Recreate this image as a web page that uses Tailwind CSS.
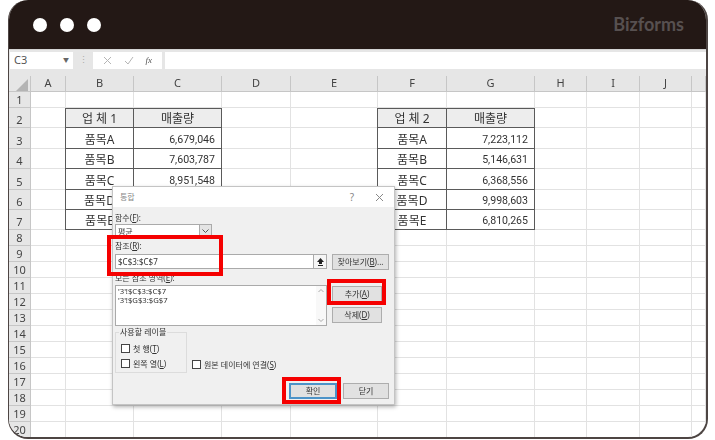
<!DOCTYPE html>
<html lang="ko">
<head>
  <meta charset="UTF-8">
  <title>Bizforms - 통합</title>
  <script src="https://cdn.jsdelivr.net/npm/@tailwindcss/browser@4"></script>
</head>
<body class="bg-white w-[715px] h-[440px] overflow-hidden font-['Noto_Sans','Noto_Sans_CJK_KR',sans-serif] text-[#444]">
  <!-- window frame -->
  <div class="relative ml-2 w-[700px] h-[439px] rounded-[20px] border-l border-r-2 border-b-2 border-[#4d4543] overflow-hidden bg-white blur-[0.3px]">
    <!-- title bar -->
    <div class="h-[49px] bg-[#231815] flex items-center pl-[24px] pr-[22px] gap-[13px]">
      <span class="w-[14px] h-[14px] rounded-full bg-white"></span>
      <span class="w-[14px] h-[14px] rounded-full bg-white"></span>
      <span class="w-[14px] h-[14px] rounded-full bg-white"></span>
      <span class="ml-auto text-[18px] font-bold text-[#575050] font-['Lato',sans-serif]">Bizforms</span>
    </div>

    <!-- formula bar -->
    <div class="h-[27px] bg-[#e6e6e6] border-t border-[#d4d4d4] flex items-start pt-[2px] text-[11px]">
      <div class="w-[63px] h-[17px] bg-white ml-px flex items-center justify-between px-1 text-[#555]">
        <span>C3</span><span class="text-[6px] text-[#666]">▼</span>
      </div>
      <span class="w-5 text-center text-[9px] leading-[15px] text-[#aaa]">⋮</span>
      <div class="w-[69px] h-[17px] bg-white flex items-center justify-around px-1 text-[#b5b5b5]">
        <svg class="w-[9px] h-[9px]" viewBox="0 0 9 9" fill="none" stroke="#b5b5b5"><path d="M1 1l7 7M8 1L1 8"/></svg>
        <svg class="w-[10px] h-[9px]" viewBox="0 0 10 9" fill="none" stroke="#b5b5b5"><path d="M1 5l3 3 5-7"/></svg>
        <span class="italic text-[9px] font-['Liberation_Serif',serif] text-[#555]">fx</span>
      </div>
      <div class="flex-1 h-[17px] bg-white ml-[3px]"></div>
    </div>

    <!-- sheet, cells are filled in by the script below -->
    <div id="sheet" class="grid grid-cols-[22px_35px_68px_88px_69px_87px_69px_88px_52px_53px_52px_1fr] grid-rows-[16px_16px_20px_21px_20px_21px_20px_20px_16px_16px_16px_16px_16px_16px_16px_16px_16px_16px_16px_16px_16px_16px] text-[11px]"></div>

    <!-- 통합 dialog -->
    <div class="absolute left-[103px] top-[186px] w-[283px] h-[219px] bg-[#f0f0f0] border border-[#c4c4c4] shadow-[1px_2px_4px_rgba(0,0,0,0.3)] text-[8px] text-[#333]">
      <div class="h-5 bg-white flex items-center pl-[7px] text-[#888]">
        <span>통합</span>
        <span class="ml-auto text-[10px] mr-[21px]">?</span>
        <svg class="w-[9px] h-[9px] mr-[10px]" viewBox="0 0 9 9" fill="none" stroke="#888"><path d="M1 1l7 7M8 1L1 8"/></svg>
      </div>
      <div class="pl-[2px] pr-[5px] pt-1">
        <div class="h-[13px] leading-[13px]">함수(<u>F</u>):</div>
        <div class="flex w-[97px] h-[13px] bg-white border border-[#aaa]">
          <span class="flex-1 pl-[2px] leading-[13px]">평균</span>
          <span class="w-3 bg-[#e4e4e4] border-l border-[#aaa] flex items-center justify-center">
            <svg class="w-[7px] h-1" viewBox="0 0 7 4" fill="none" stroke="#555"><path d="M.5.5l3 3 3-3"/></svg>
          </span>
        </div>

        <div class="mt-[3px] h-[12px] leading-[12px]">참조(<u>R</u>):</div>
        <div class="flex mt-[2px] items-start">
          <div class="flex w-[212px] h-[15px] bg-white border border-[#aaa]">
            <span class="flex-1 pl-[2px] text-[8px] leading-[13px]">$C$3:$C$7</span>
            <span class="w-[13px] border-l border-[#aaa] bg-[#f5f5f5] flex items-center justify-center">
              <svg class="w-[7px] h-2" viewBox="0 0 7 8" fill="#222"><path d="M3.5 0L7 4H5v2H2V4H0zM1 7h5v1H1z"/></svg>
            </span>
          </div>
          <button class="ml-[5px] w-[57px] h-4 bg-[#e1e1e1] border border-[#adadad] text-[8px] leading-[14px]">찾아보기(<u>B</u>)...</button>
        </div>

        <div class="mt-px h-[13px] leading-[13px]">모든 참조 영역(<u>E</u>):</div>
        <div class="flex mt-px items-start">
          <div class="flex w-[212px] h-[41px] bg-white border border-[#aaa]">
            <div class="flex-1 pl-[2px] text-[7.7px] leading-[9px] pt-px">
              <p>'3'!$C$3:$C$7</p>
              <p>'3'!$G$3:$G$7</p>
            </div>
            <div class="w-[10px] flex flex-col justify-between items-center py-[3px] bg-[#f8f8f8]">
              <svg class="w-[6px] h-[3px]" viewBox="0 0 6 3" fill="none" stroke="#aaa"><path d="M.5 3L3 .5 5.500 3"/></svg>
              <svg class="w-[6px] h-[3px]" viewBox="0 0 6 3" fill="none" stroke="#aaa"><path d="M.5 0L3 2.500 5.500 0"/></svg>
            </div>
          </div>
          <div class="ml-[5px] w-[50px] flex flex-col gap-[5px] pt-px">
            <button class="h-4 bg-[#e1e1e1] border border-[#adadad] leading-[14px]">추가(<u>A</u>)</button>
            <button class="h-4 bg-[#e1e1e1] border border-[#adadad] leading-[14px]">삭제(<u>D</u>)</button>
          </div>
        </div>

        <div class="flex mt-px items-end">
          <fieldset class="w-[72px] h-[46px] border border-[#dcdcdc] pl-[5px]">
            <legend class="text-[8px] px-px -ml-[2px] leading-[10px]">사용할 레이블</legend>
            <label class="flex items-center gap-[3px] h-[15px] mt-1"><span class="w-[9px] h-[9px] bg-white border border-[#444]"></span><span>첫 행(<u>T</u>)</span></label>
            <label class="flex items-center gap-[3px] h-[15px]"><span class="w-[9px] h-[9px] bg-white border border-[#444]"></span><span>왼쪽 열(<u>L</u>)</span></label>
          </fieldset>
          <label class="flex items-center gap-[3px] ml-[5px] h-[15px] mb-px"><span class="w-[9px] h-[9px] bg-white border border-[#444]"></span><span>원본 데이터에 연결(<u>S</u>)</span></label>
        </div>

        <div class="flex justify-end gap-[6px] mt-[10px]">
          <button class="w-[48px] h-4 bg-[#e1e1e1] border-2 border-[#4c93c8] leading-[12px]">확인</button>
          <button class="w-[46px] h-4 bg-[#e1e1e1] border border-[#adadad] leading-[14px]">닫기</button>
        </div>
      </div>
    </div>

    <!-- red callouts -->
    <div class="absolute left-[98px] top-[235px] w-[116px] h-[41px] border-4 border-[#f50000]"></div>
    <div class="absolute left-[318px] top-[279px] w-[59px] h-[26px] border-4 border-[#f50000]"></div>
    <div class="absolute left-[273px] top-[377px] w-[59px] h-[27px] border-4 border-[#f50000]"></div>
  </div>

  <script>
    const colNames = ['', 'A', 'B', 'C', 'D', 'E', 'F', 'G', 'H', 'I', 'J', ''];
    const tables = [
      { col: 2, title: '업 체 1', values: ['6,679,046', '7,603,787', '8,951,548', '', ''] },
      { col: 6, title: '업 체 2', values: ['7,223,112', '5,146,631', '6,368,556', '9,998,603', '6,810,265'] }
    ];
    const names = ['품목A', '품목B', '품목C', '품목D', '품목E'];
    const sheet = document.getElementById('sheet');

    function addCell(text, cls) {
      const cell = document.createElement('div');
      cell.className = cls;
      cell.textContent = text;
      sheet.appendChild(cell);
    }

    // column header row
    colNames.forEach((name, i) => {
      if (i === 0) {
        const corner = document.createElement('div');
        corner.className = 'bg-[#e6e6e6] border-r border-b border-[#c6c6c6] relative';
        corner.innerHTML = '<svg class="absolute right-[2px] bottom-0 w-[12px] h-[12px]" viewBox="0 0 12 12" fill="#b4b4b4"><path d="M12 0v12H0z"/></svg>';
        sheet.appendChild(corner);
      } else {
        addCell(name, 'bg-[#e6e6e6] border-r border-b border-[#c6c6c6] flex items-center justify-center text-[#444]');
      }
    });

    for (let row = 1; row <= 20; row++) {
      addCell(row, 'bg-[#e6e6e6] border-r border-b border-[#c6c6c6] flex items-end justify-center leading-[15px] text-[#444]');
      for (let col = 1; col < 12; col++) {
        const table = tables.find(t => col === t.col || col === t.col + 1);
        if (table && row >= 2 && row <= 7) {
          const isName = col === table.col;
          let text = '';
          let cls = 'border-r border-b border-[#5a5a5a] flex items-end leading-[16px] text-[#333] ';
          if (row === 2) {
            cls += 'bg-[#ededed] border-t justify-center text-[12px] ';
            text = isName ? table.title : '매출량';
          } else if (isName) {
            cls += 'justify-center text-[12px] ';
            text = names[row - 3];
          } else {
            cls += "justify-end pr-[6px] text-[10.6px] font-['Roboto',sans-serif] ";
            text = table.values[row - 3];
          }
          // overlap the neighbour's grid line so the table edge sits on it
          if (isName) cls += 'border-l -ml-px';
          addCell(text, cls);
        } else {
          addCell('', 'border-r border-b border-[#e2e2e2]');
        }
      }
    }
  </script>
</body>
</html>
